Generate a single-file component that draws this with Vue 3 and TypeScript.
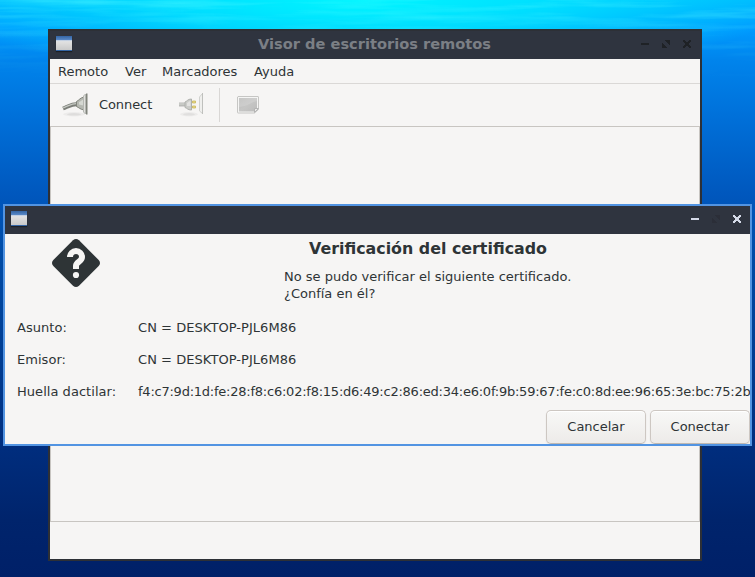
<script setup lang="ts">
interface MenuEntry { label: string; cls: string }
interface Field { label: string; value: string; cls: string }

const menus: MenuEntry[] = [
  { label: 'Remoto', cls: 'm-remote' },
  { label: 'Ver', cls: 'm-view' },
  { label: 'Marcadores', cls: 'm-bookmarks' },
  { label: 'Ayuda', cls: 'm-help' },
]

const fields: Field[] = [
  { label: 'Asunto:', value: 'CN = DESKTOP-PJL6M86', cls: 'f-name' },
  { label: 'Emisor:', value: 'CN = DESKTOP-PJL6M86', cls: 'f-name' },
  {
    label: 'Huella dactilar:',
    value: 'f4:c7:9d:1d:fe:28:f8:c6:02:f8:15:d6:49:c2:86:ed:34:e6:0f:9b:59:67:fe:c0:8d:ee:96:65:3e:bc:75:2b',
    cls: 'f-print',
  },
]
</script>

<template>
  <div class="desktop">
    <svg class="water" width="755" height="100" viewBox="0 0 755 100">
      <defs>
        <filter id="ripple" x="0" y="0" width="100%" height="100%">
          <feTurbulence type="fractalNoise" baseFrequency="0.009 0.13" numOctaves="3" seed="8" />
          <feColorMatrix values="0 0 0 0 0.1  0 0 0 0 .95  0 0 0 0 1  2.2 0 0 0 -.9" />
        </filter>
        <linearGradient id="fade" x1="0" y1="0" x2="0" y2="1">
          <stop offset="0" stop-color="#fff" stop-opacity=".5" />
          <stop offset=".3" stop-color="#fff" stop-opacity=".2" />
          <stop offset=".8" stop-color="#fff" stop-opacity="0" />
        </linearGradient>
        <mask id="depth"><rect width="755" height="100" fill="url(#fade)" /></mask>
      </defs>
      <g mask="url(#depth)"><rect width="755" height="100" filter="url(#ripple)" /></g>
    </svg>

    <section class="window viewer">
      <header class="titlebar">
        <span class="app-icon"></span>
        <h1 class="title"><span>Visor de escritorios remotos</span></h1>
        <svg class="controls" width="52" height="10" viewBox="0 0 52 10" shape-rendering="crispEdges" fill="#1f2226">
          <rect x="1" y="4" width="8" height="2" />
          <path d="M25 1h5v5h-1v-1h-1v-1h-1v-1h-1v-1h-1zM22 4h1v1h1v1h1v1h1v1h1v1h-5z" />
          <path d="M43 1h2v1h1v1h2V2h1V1h2v2h-1v1h-1v2h1v1h1v2h-2V8h-1V7h-2v1h-1v1h-2V7h1V6h1V4h-1V3h-1z" />
        </svg>
      </header>
      <nav class="menubar">
        <span v-for="m in menus" :key="m.label" :class="m.cls">{{ m.label }}</span>
      </nav>
      <div class="toolbar">
        <svg class="plug" width="28" height="26" viewBox="0 0 28 26">
          <ellipse cx="12" cy="22.3" rx="11" ry="2.2" fill="#000" opacity=".04" />
          <ellipse cx="12" cy="22.3" rx="7" ry="1.3" fill="#000" opacity=".06" />
          <path d="M1 16.500C6 14.500 9 12 16 12" fill="none" stroke="#7b7e78" stroke-width="4" />
          <path d="M1 16C6 14 9 11.500 16 11.300" fill="none" stroke="#c5c8c2" stroke-width="1.200" />
          <path d="M14.500 9.500C17 8.500 18 5.500 22.500 5v13C18 17.500 17 15.500 14.500 14.500z" fill="#b5b8b1" stroke="#80837b" />
          <path d="M17 10c2-.5 2.500-2 4.500-2.500v6c-2 0-3-1-4.500-1z" fill="#d5d8d2" />
          <path d="M21.500 4L23.500 2v20L21.500 20z" fill="#dfe0dc" stroke="#b5b7b2" />
          <rect x="24" y="1.500" width="1.500" height="21" fill="#80837b" />
        </svg>
        <span class="connect">Connect</span>
        <svg class="unplug" width="28" height="26" viewBox="0 0 28 26">
          <ellipse cx="11" cy="22.3" rx="9" ry="2.2" fill="#000" opacity=".04" />
          <ellipse cx="11" cy="22.300" rx="6" ry="1.200" fill="#000" opacity=".05" />
          <rect x="1" y="10.500" width="7" height="4" fill="#b9bab7" />
          <rect x="1" y="11.500" width="7" height="1" fill="#d6d7d4" />
          <path d="M7 10C9 9.500 9.500 7 13.500 7V18C9.500 18 9 16 7 15.500z" fill="#cbccc9" stroke="#aeb0ac" />
          <path d="M9 11c1-.5 2-2 3.500-2v5H9z" fill="#e2e2e0" />
          <path d="M14.500 9h3v2h-3zM14.500 14h3v2h-3z" fill="#eadb86" stroke="#c8b65d" stroke-width=".8" />
          <path d="M21.500 5L24.500 1.500v20L21.500 19z" fill="#efefed" stroke="#d1d2cf" />
          <rect x="24" y="1" width="1" height="21" fill="#bfc0bd" />
        </svg>
        <i class="divider"></i>
        <svg class="screen" width="24" height="22" viewBox="0 0 24 22">
          <defs>
            <linearGradient id="screen-fill" x1="0" y1="0" x2="1" y2="1">
              <stop offset="0" stop-color="#bdbdbc" /><stop offset=".5" stop-color="#c6c6c5" /><stop offset="1" stop-color="#bcbcbb" />
            </linearGradient>
          </defs>
          <path d="M2 2.500h20q.5 0 .5.500v12.500l-4 3.500h-16.500q-.5 0-.5-.500V3z" fill="#f5f5f4" stroke="#c6c6c4" />
          <path d="M3 4h18v10.500l-3 3H3z" fill="url(#screen-fill)" />
          <path d="M3 13C9 13 14 9 21 7V4H3z" fill="#fff" opacity=".15" />
          <path d="M18.500 18.500v-4h4z" fill="#eaeae8" stroke="#b4b4b4" />
        </svg>
      </div>
      <div class="canvas"></div>
    </section>

    <section class="window dialog">
      <header class="titlebar">
        <span class="app-icon"></span>
        <svg class="controls" width="52" height="10" viewBox="0 0 52 10" shape-rendering="crispEdges" fill="#d5dae8">
          <rect x="1" y="4" width="8" height="2" />
          <path fill="#2b2e38" d="M25 1h5v5h-1v-1h-1v-1h-1v-1h-1v-1h-1zM22 4h1v1h1v1h1v1h1v1h1v1h-5z" />
          <path d="M43 1h2v1h1v1h2V2h1V1h2v2h-1v1h-1v2h1v1h1v2h-2V8h-1V7h-2v1h-1v1h-2V7h1V6h1V4h-1V3h-1z" />
        </svg>
      </header>
      <div class="body">
        <div class="intro">
          <svg class="question" width="48" height="48" viewBox="0 0 48 48">
            <path d="M21 1.300Q24-1.300 27 1.300L46.700 21Q49.300 24 46.700 27L27 46.700Q24 49.300 21 46.700L1.300 27Q-1.300 24 1.300 21z" fill="#2e3436" />
            <path d="M18 18A6 6 0 0 1 30 18C30 23 24 22.500 24 27V30" fill="none" stroke="#f6f5f4" stroke-width="6" />
            <circle cx="24" cy="36" r="3.100" fill="#f6f5f4" />
          </svg>
          <div class="message">
            <h2><span>Verificación del certificado</span></h2>
            <p><span class="l1">No se pudo verificar el siguiente certificado.</span><br /><span class="l2">¿Confía en él?</span></p>
          </div>
        </div>
        <dl class="fields">
          <template v-for="f in fields" :key="f.label">
            <dt><span>{{ f.label }}</span></dt>
            <dd><span :class="f.cls">{{ f.value }}</span></dd>
          </template>
        </dl>
        <div class="actions">
          <button type="button">Cancelar</button>
          <button type="button">Conectar</button>
        </div>
      </div>
    </section>
  </div>
</template>

<style>
body { margin: 0; overflow: hidden; }
</style>

<style scoped>
.desktop {
  position: relative;
  width: 755px;
  height: 577px;
  overflow: hidden;
  font: 13px/17px "DejaVu Sans", sans-serif;
  color: #2e3436;
  background:
    radial-gradient(ellipse 430px 80px at 360px 0, rgba(0, 245, 255, 1), rgba(0, 235, 255, .75) 45%, rgba(0, 200, 255, 0)),
    linear-gradient(#00b8ff 0, #009bff 28px, #0084ec 60px, #006fd8 120px, #0057bd 195px, #004aa4 260px, #003c91 360px, #002d7d 450px, #00246c 520px, #002068 577px);
}
.water { position: absolute; left: 0; top: 0; }
.window { position: absolute; box-sizing: border-box; display: flex; flex-direction: column; background: #f6f5f4; overflow: hidden; }
.viewer { left: 48px; top: 29px; width: 654px; height: 532px; border: 2px solid #2d3036; }
.dialog { left: 3px; top: 204px; width: 749px; height: 242px; border: 2px solid #5294e2; }
.titlebar { display: flex; align-items: center; flex: none; height: 28px; padding: 0 8px 0 6px; background: #2f343f; }
.controls { flex: none; margin-left: auto; margin-bottom: 2px; }
.app-icon {
  flex: none;
  width: 16px;
  height: 15px;
  margin-bottom: 3px;
  background: linear-gradient(#3465a4 0, #5b8ac8 4px, #a9c0df 4px, #dce0e6 5px, #e0e0e0 6px, #c9c9c9 14px, #3465a4 14px);
  box-shadow: 0 1px 1px rgba(0, 0, 0, .4);
}
.title { flex: 1; margin: 0; padding-left: 37px; text-align: center; font-size: 14.6px; line-height: 26px; height: 28px; color: #7b7f85; white-space: nowrap; }
.menubar { display: flex; flex: none; height: 24px; padding-left: 8px; border-bottom: 1px solid #dad8d6; line-height: 25px; gap: 16px; white-space: nowrap; }
.m-remote { width: 51px; }
.m-view { width: 21px; }
.m-bookmarks { width: 76px; }
.toolbar { display: flex; align-items: center; flex: none; height: 42px; }
.plug { margin-left: 12px; }
.connect { width: 54px; margin: 0 0 2px 9px; letter-spacing: -.08px; white-space: nowrap; }
.unplug { margin-left: 25px; }
.divider { width: 1px; height: 34px; margin: 0 16px 0 13px; background: #d9d7d5; }
.canvas { box-sizing: border-box; flex: none; height: 396px; border: 1px solid #c8c5c1; }
.body { display: flex; flex: 1; flex-direction: column; }
.intro { display: flex; height: 78px; }
.question { flex: none; margin: 5px 0 0 47px; }
.message { flex: 1; margin: 5px 0 0 6px; display: flex; flex-direction: column; align-items: center; }
h2 { margin: 0; font-size: 15.87px; line-height: 19px; white-space: nowrap; }
p { width: 288px; margin: 10px 0 0; line-height: 17px; white-space: nowrap; }
.fields { display: grid; grid-template-columns: 121px 1fr; grid-auto-rows: 32px; margin: 0 0 0 12px; line-height: 32px; white-space: nowrap; }
dt, dd { margin: 0; min-width: 0; }
dt { letter-spacing: .04px; }
.f-name { letter-spacing: .05px; }
.f-print { letter-spacing: -.235px; }
.actions { display: flex; justify-content: flex-end; gap: 4px; margin-top: 2px; }
button {
  width: 100px;
  height: 34px;
  padding: 0;
  border: 1px solid #cdc7c2;
  border-bottom-color: #bfb8b1;
  border-radius: 5px;
  background: linear-gradient(#f8f8f7, #edebe9);
  box-shadow: inset 0 1px #fff, 0 1px 2px rgba(0, 0, 0, .07);
  color: #2e3436;
  font: 13px/30px "DejaVu Sans", sans-serif;
}
</style>
